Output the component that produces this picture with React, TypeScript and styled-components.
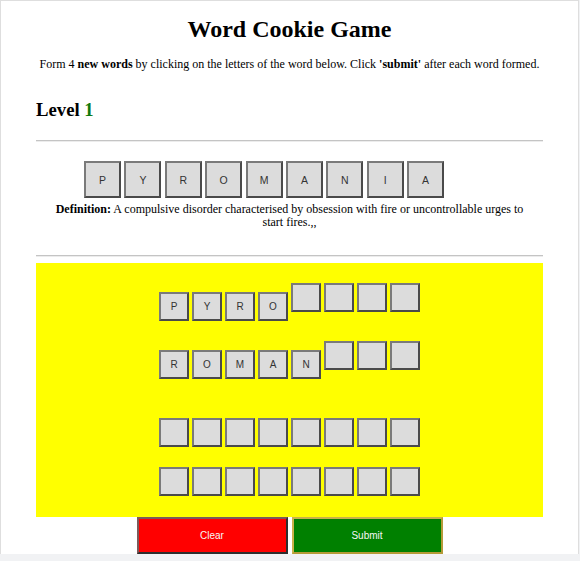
import React from "react";
import styled, { createGlobalStyle } from "styled-components";

const GlobalStyle = createGlobalStyle`
  html, body {
    margin: 0;
    padding: 0;
    background: #f1f2f4;
  }
  * { box-sizing: border-box; }
`;

const Card = styled.main`
  width: 579px;
  background: #ffffff;
  border: 1px solid #dedede;
  border-bottom: none;
  padding: 0 35px;
  font-family: "Liberation Serif", "Times New Roman", serif;
  color: #000;
  display: flow-root;
`;

const Title = styled.h1`
  margin: 14px 0 0;
  font-size: 24px;
  line-height: 28px;
  font-weight: bold;
  text-align: center;
`;

const Intro = styled.p`
  margin: 14px 0 0;
  font-size: 12px;
  line-height: 14px;
  text-align: center;
`;

const LevelHeading = styled.h3`
  margin: 28px 0 0;
  font-size: 18.72px;
  line-height: 22px;
  font-weight: bold;
`;

const LevelNumber = styled.span`
  color: #107a10;
`;

const Divider = styled.hr<{ $gap: number }>`
  margin: ${(p) => p.$gap}px 0 0;
  height: 0;
  border: none;
  border-top: 1px solid #c4c4c4;
  border-bottom: 1px solid #ececec;
`;

const WordRow = styled.div`
  display: flex;
  gap: 3.4px;
  padding-left: 48px;
  margin-top: 19px;
`;

const Tile = styled.button<{ $size: "large" | "small"; $raised?: boolean }>`
  flex: none;
  width: ${(p) => (p.$size === "large" ? 37 : 30)}px;
  height: ${(p) => (p.$size === "large" ? 37 : 29)}px;
  margin: ${(p) => (p.$raised ? "9px" : "0")} 0 0;
  padding: 0;
  background: #dcdcdc;
  border: 2px solid;
  border-color: #7a7a7a #4a4a4a #4a4a4a #7a7a7a;
  font-family: "Liberation Sans", Arial, sans-serif;
  font-size: ${(p) => (p.$size === "large" ? 10.5 : 10)}px;
  color: #333;
  display: flex;
  align-items: center;
  justify-content: center;
`;

const Definition = styled.p`
  margin: 5px 0 0;
  padding: 0 16px;
  font-size: 12px;
  line-height: 13px;
  text-align: center;
`;

const Board = styled.section`
  margin-top: 6px;
  background: #ffff00;
  padding: 20px 0 21px;
  display: flex;
  flex-direction: column;
  gap: 20px;
`;

const GuessRow = styled.div<{ $spaced?: boolean }>`
  display: flex;
  justify-content: center;
  align-items: flex-start;
  gap: 3px;
  margin-top: ${(p) => (p.$spaced ? 19 : 0)}px;
`;

const Actions = styled.div`
  display: flex;
  justify-content: center;
  gap: 4px;
`;

const ActionButton = styled.button<{ $variant: "clear" | "submit" }>`
  width: 151px;
  height: 37px;
  padding: 0;
  font-family: "Liberation Sans", Arial, sans-serif;
  font-size: 10px;
  color: #f6f6f6;
  background: ${(p) => (p.$variant === "clear" ? "#ff0000" : "#008000")};
  border: 2px solid;
  border-color: ${(p) =>
    p.$variant === "clear"
      ? "#7c5a5a #2e2e2e #2e2e2e #7c5a5a"
      : "#c9b24a #b59a38 #b59a38 #c9b24a"};
`;

const SOURCE = "PYROMANIA".split("");
const GUESSES: { letters: string[]; spaced?: boolean }[] = [
  { letters: ["P", "Y", "R", "O"] },
  { letters: ["R", "O", "M", "A", "N"] },
  { letters: [], spaced: true },
  { letters: [] },
];
const SLOTS = 8;

export default function App() {
  return (
    <>
      <GlobalStyle />
      <Card>
        <Title>Word Cookie Game</Title>
        <Intro>
          Form 4 <b>new words</b> by clicking on the letters of the word below.
          Click <b>'submit'</b> after each word formed.
        </Intro>
        <LevelHeading>
          Level <LevelNumber>1</LevelNumber>
        </LevelHeading>
        <Divider $gap={19} />
        <WordRow>
          {SOURCE.map((l, i) => (
            <Tile key={i} $size="large">
              {l}
            </Tile>
          ))}
        </WordRow>
        <Definition>
          <b>Definition:</b> A compulsive disorder characterised by obsession
          with fire or uncontrollable urges to start fires.,,
        </Definition>
        <Divider $gap={26} />
        <Board>
          {GUESSES.map((g, r) => (
            <GuessRow key={r} $spaced={g.spaced}>
              {Array.from({ length: SLOTS }).map((_, i) => {
                const l = g.letters[i];
                return (
                  <Tile key={i} $size="small" $raised={!!l}>
                    {l ?? ""}
                  </Tile>
                );
              })}
            </GuessRow>
          ))}
        </Board>
        <Actions>
          <ActionButton $variant="clear">Clear</ActionButton>
          <ActionButton $variant="submit">Submit</ActionButton>
        </Actions>
      </Card>
    </>
  );
}
